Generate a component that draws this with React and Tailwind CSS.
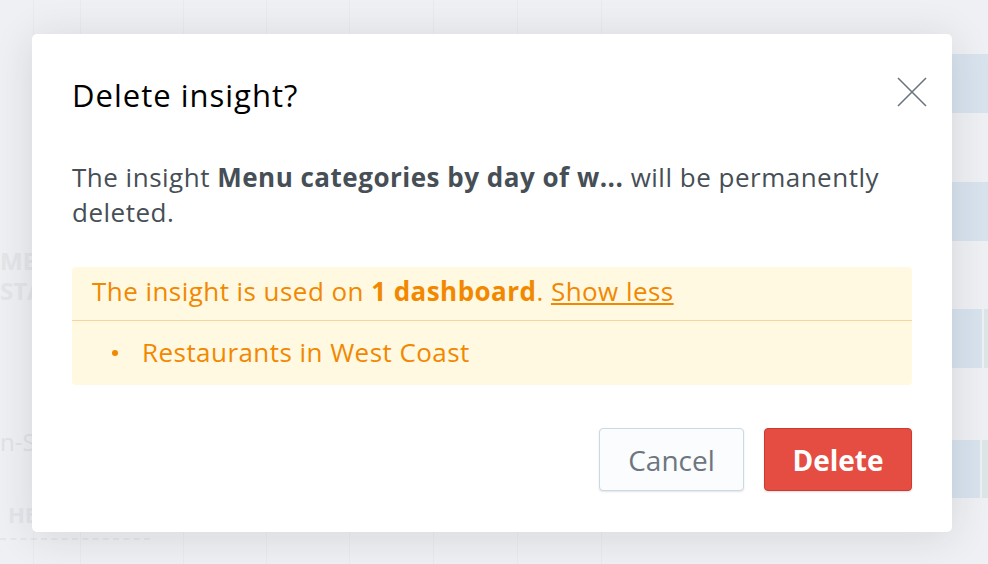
import React from 'react';

// Faint dashboard that sits behind the modal overlay
function Backdrop() {
  const cols = [34, 47, 103, 83, 83, 84, 84, 84];
  return (
    <div className="absolute inset-0 overflow-hidden bg-[#eff0f3]">
      <div className="absolute inset-0 flex">
        {cols.map((w, i) => (
          <div key={i} className="h-full shrink-0 border-r border-[#e9eaed]" style={{ width: w }} />
        ))}
      </div>
      <div className="absolute right-0 top-[54px] w-[36px] h-[59px] bg-[#d8e3ee]" />
      <div className="absolute right-0 top-[182px] w-[36px] h-[59px] bg-[#d8e3ee]" />
      <div className="absolute right-0 top-[309px] w-[36px] h-[59px] flex">
        <div className="w-[30px] h-full bg-[#d8e3ee]" />
        <div className="w-[2px] h-full bg-[#eff0f3]" />
        <div className="flex-1 h-full bg-[#dde6e6]" />
      </div>
      <div className="absolute right-0 top-[440px] w-[36px] h-[58px] flex">
        <div className="w-[28px] h-full bg-[#d8e3ee]" />
        <div className="w-[2px] h-full bg-[#eff0f3]" />
        <div className="flex-1 h-full bg-[#dde6e6]" />
      </div>
      <div className="absolute left-0 top-[246px] text-[24px] leading-[30px] font-bold text-[#e3e5e9]">ME<br />STA</div>
      <div className="absolute left-0 top-[424px] text-[24px] text-[#e0e2e6]">n-S</div>
      <div className="absolute left-[8px] top-[498px] text-[22px] font-bold text-[#e3e5e9]">HE</div>
      <div className="absolute left-0 top-[538px] w-[150px] border-t-2 border-dashed border-[#e3e6ea]" />
    </div>
  );
}

export default function App() {
  return (
    <div className="relative w-[988px] h-[564px] overflow-hidden" style={{ fontFamily: '"Open Sans", "Noto Sans", sans-serif' }}>
      <Backdrop />
      <div className="relative pt-[34px] pl-[32px]">
        <div className="w-[920px] h-[498px] bg-white rounded-[5px] shadow-[0_4px_40px_rgba(20,30,50,0.12)] px-[40px] pt-[43px] flex flex-col">
          <div className="flex items-start justify-between">
            <h1 className="text-[31px] leading-[36px] tracking-[1px] text-[#000]">Delete insight?</h1>
            <button className="-mr-[15px] w-[30px] h-[30px] flex items-center justify-center" aria-label="Close">
              <svg width="30" height="30" viewBox="0 0 30 30" fill="none" stroke="#6d7680" strokeWidth="1.6">
                <path d="M1 1 L29 29 M29 1 L1 29" />
              </svg>
            </button>
          </div>

          <p className="mt-[47px] text-[26px] leading-[35px] tracking-[0.5px] text-[#464e56]">
            The insight <strong className="font-bold">Menu categories by day of w...</strong> will be permanently deleted.
          </p>

          <div className="mt-[37px] rounded-[4px] bg-[#fff9e2] text-[#f28800] text-[26px] tracking-[0.45px]">
            <div className="px-[20px] pt-[8px] pb-[12px] leading-[33px] border-b border-[#fbd49c]">
              The insight is used on <strong className="font-bold">1 dashboard</strong>. <span className="underline">Show less</span>
            </div>
            <ul className="px-[20px] pt-[15px] pb-[16px] leading-[33px]">
              <li className="flex items-center gap-[24px] pl-[20px]">
                <span className="w-[6px] h-[6px] rounded-full bg-[#f28800]" />
                Restaurants in West Coast
              </li>
            </ul>
          </div>

          <div className="mt-[43px] flex justify-end gap-[20px]">
            <button className="w-[145px] h-[63px] rounded-[4px] border border-[#ccd8e2] bg-[#fafcfd] text-[28px] text-[#6d7680] shadow-[0_1px_2px_rgba(20,30,50,0.12)]">
              Cancel
            </button>
            <button className="w-[148px] h-[63px] rounded-[4px] border border-[#cf3a30] bg-[#e54d42] text-[28px] font-bold text-white shadow-[0_1px_2px_rgba(20,30,50,0.15)]">
              Delete
            </button>
          </div>
        </div>
      </div>
    </div>
  );
}
